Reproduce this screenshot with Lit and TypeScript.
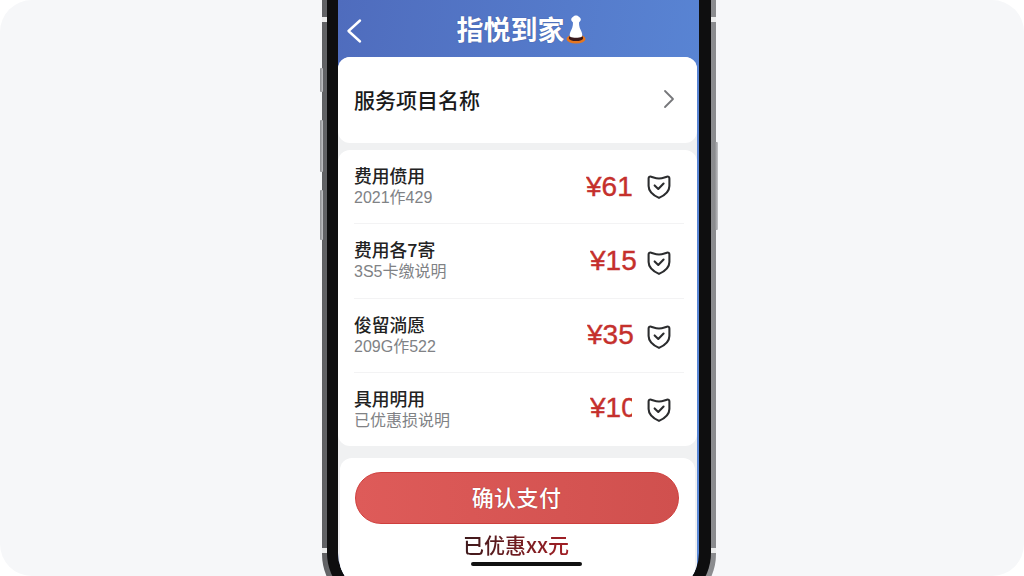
import { LitElement, html, css, svg } from "lit";
import { customElement } from "lit/decorators.js";

const rows = [
  { t: "费用偾用", s: "2021作429", p: "¥61", left: 586, w: 47, py: 0, sy: 0 },
  { t: "费用各7寄", s: "3S5卡缴说明", p: "¥15", left: 590, w: 47, py: 0, sy: 2 },
  { t: "俊留淌愿", s: "209G作522", p: "¥35", left: 587, w: 50, py: 0, sy: 2 },
  { t: "具用明用", s: "已优惠损说明", p: "¥10", left: 590, w: 42, py: -1, sy: 1 },
];

const shield = svg`<path d="M4.5 2.6C7 3.4 9.2 4.4 12 4.4S17 3.4 19.5 2.6C21 2.2 22 2.9 22 4.4V11.5C22 16.8 17.2 20.6 12 23C6.8 20.6 2 16.8 2 11.5V4.4C2 2.9 3 2.2 4.5 2.6Z"/><path d="M7.8 11L11.3 14.4L16.4 9.2"/>`;

@customElement("app-root")
export class AppRoot extends LitElement {
  static styles = css`
    :host { display: block; width: 1024px; height: 576px; background: #fff; overflow: hidden;
      font-family: "Noto Sans CJK SC", "Noto Sans", sans-serif; }
    .canvas { width: 1024px; height: 576px; box-sizing: border-box; padding-left: 322px; background: #f6f7f9;
      border-radius: 32px; overflow: hidden; }
    .phone { position: relative; width: 394px; height: 610px; box-sizing: border-box; padding: 0 5px 5px;
      border-radius: 0 0 56px 56px;
      background: linear-gradient(90deg, #5f6063 0, #c4c5c8 30%, #bfc0c3 60%, #8a8b8e 100%); }
    .bezel { height: 100%; box-sizing: border-box; padding: 0 12px 10px 11px; background: #0e0e0f;
      border-radius: 0 0 52px 52px; }
    .screen { height: 100%; background: linear-gradient(100deg, #4f6cbd 0%, #5b8ad9 100%);
      border-radius: 0 0 42px 42px; overflow: hidden; display: flex; flex-direction: column; }
    .btn { position: absolute; width: 3px; background: linear-gradient(90deg,#8d8e91,#c4c5c8); border-radius: 1px; }
    .b1 { left: -2px; top: 68px; height: 24px; }
    .b2 { left: -2px; top: 120px; height: 52px; }
    .b3 { left: -2px; top: 190px; height: 50px; }
    .b4 { right: -2px; top: 142px; height: 88px; }
    .band { position: absolute; width: 5px; height: 5px; background: #eceded; }
    .band.l1 { left: 0; top: 17px; } .band.r1 { right: 0; top: 17px; }
    .band.l2 { left: 0; top: 548px; } .band.r2 { right: 0; top: 548px; }

    header { height: 57px; flex: none; display: flex; align-items: center; position: relative;
      justify-content: center; color: #fff; }
    .back { position: absolute; left: 7px; top: 18px; width: 18px; height: 26px; fill: none; stroke: #fff; stroke-width: 2.4;
      stroke-linecap: round; stroke-linejoin: round; }
    .title { display: flex; align-items: center; margin: 1px 0 0 5px; font-size: 27px; font-weight: 700; line-height: 36px;
      color: #fff; text-shadow: 0 0 1px rgba(30,40,90,.6); }
    .pawn { width: 20px; height: 30px; margin-left: 1px; }

    .body { width: 359px; flex: 1; background: #f0f1f2; border-radius: 12px 12px 0 0; display: flex; flex-direction: column; }
    .card { background: #fff; border-radius: 12px; }
    .service { height: 86px; flex: none; display: flex; align-items: center; justify-content: space-between;
      padding: 0 22px 2px 16px; box-sizing: border-box; font-size: 21px; font-weight: 500; color: #1a1a1a; }
    .chev { width: 12px; height: 20px; fill: none; stroke: #76777a; stroke-width: 1.8; stroke-linecap: round; stroke-linejoin: round; }
    .list { margin-top: 7px; height: 296px; flex: none; padding: 0 13px 0 16px; box-sizing: border-box; display: flex; flex-direction: column; }
    .row { flex: 1; display: flex; align-items: center; border-bottom: 1px solid #f3f3f4; position: relative; }
    .row:last-child { border-bottom: none; }
    .info { display: flex; flex-direction: column; }
    .name { font-size: 17.8px; font-weight: 500; line-height: 22px; color: #222; margin-bottom: 1px; }
    .sub { font-family: "Liberation Sans", "Noto Sans CJK SC", sans-serif; font-size: 16px; line-height: 22px; color: #808285; white-space: nowrap; }
    .price { position: absolute; top: 50%; transform: translateY(-50%); overflow: hidden; white-space: nowrap;
      font-family: "Liberation Sans", Arial, sans-serif; font-size: 28px; line-height: 32px; color: #c5302c; -webkit-text-stroke: .4px #c5302c; }
    .shield { position: absolute; left: 292px; top: 50%; width: 26px; height: 26px; fill: none; stroke: #2b2c2e;
      stroke-width: 2; stroke-linecap: round; stroke-linejoin: round; }

    .foot { margin: 12px 2px 0 2px; flex: 1; background: #fff; border-radius: 12px 12px 0 0; display: flex; flex-direction: column;
      align-items: center; padding: 14px 0 0 0; }
    .pay { width: 324px; height: 52px; flex: none; box-sizing: border-box; border: 1px solid #cf3f3d; border-radius: 26px;
      background: linear-gradient(90deg, #de5b59, #d0504e); color: #fff; font-size: 22px; font-weight: 500;
      display: flex; align-items: center; justify-content: center; letter-spacing: .4px; margin-left: -2px; padding-bottom: 5px;
      text-shadow: 0 0 1px rgba(120,20,20,.7); }
    .saved { margin-top: 5px; font-size: 21px; font-weight: 500; line-height: 30px; margin-right: 3px; color: #5c1c20;
      background: linear-gradient(90deg, #3c1a1c, #a31f25); -webkit-background-clip: text; background-clip: text; -webkit-text-fill-color: transparent; }
    .home { margin: 3px 0 0 17px; width: 111px; height: 4px; flex: none; border-radius: 2px; background: #111; }
  `;

  render() {
    return html`<div class="canvas">
      <div class="phone">
        <i class="btn b1"></i><i class="btn b2"></i><i class="btn b3"></i><i class="btn b4"></i>
        <i class="band l1"></i><i class="band r1"></i><i class="band l2"></i><i class="band r2"></i>
        <div class="bezel"><div class="screen">
          <header>
            <svg class="back" viewBox="0 0 18 26"><path d="M15 2.5L3.5 13L15 23.5"/></svg>
            <div class="title">指悦到家<svg class="pawn" viewBox="0 0 20 30">
              <ellipse cx="10" cy="25" rx="9.5" ry="4.6" fill="#e5761f"/>
              <ellipse cx="10" cy="24" rx="7.2" ry="3.1" fill="#3a1a1c"/>
              <path fill="#fff" d="M7.5 2.5C8.3 1.3 11.7 1.3 12.5 2.5C13.2 3.2 14.6 3.8 14.8 5.2C14.9 6.6 13.8 7.6 13.1 8.2C12.9 10.5 13.3 13 14.5 15.5C15.7 18 17.2 21 15.5 23C13 24 7 24 4.5 23C2.8 21 4.3 18 5.5 15.5C6.7 13 7.1 10.5 6.9 8.2C6.2 7.6 5.1 6.6 5.2 5.2C5.4 3.8 6.8 3.2 7.5 2.5Z"/>
            </svg></div>
          </header>
          <div class="body">
            <div class="card service"><span>服务项目名称</span>
              <svg class="chev" viewBox="0 0 12 20"><path d="M2 2L10 10L2 18"/></svg></div>
            <div class="card list">
              ${rows.map((r) => html`<div class="row">
                <div class="info"><span class="name">${r.t}</span><span class="sub">${r.s}</span></div>
                <span class="price" style="left:${r.left - 354}px;width:${r.w}px;margin-top:${r.py}px">${r.p}</span>
                <svg class="shield" style="margin-top:${r.sy - 13}px" viewBox="0 0 24 25">${shield}</svg>
              </div>`)}
            </div>
            <div class="foot">
              <div class="pay">确认支付</div>
              <div class="saved">已优惠xx元</div>
              <div class="home"></div>
            </div>
          </div>
        </div></div>
      </div>
    </div>`;
  }
}
